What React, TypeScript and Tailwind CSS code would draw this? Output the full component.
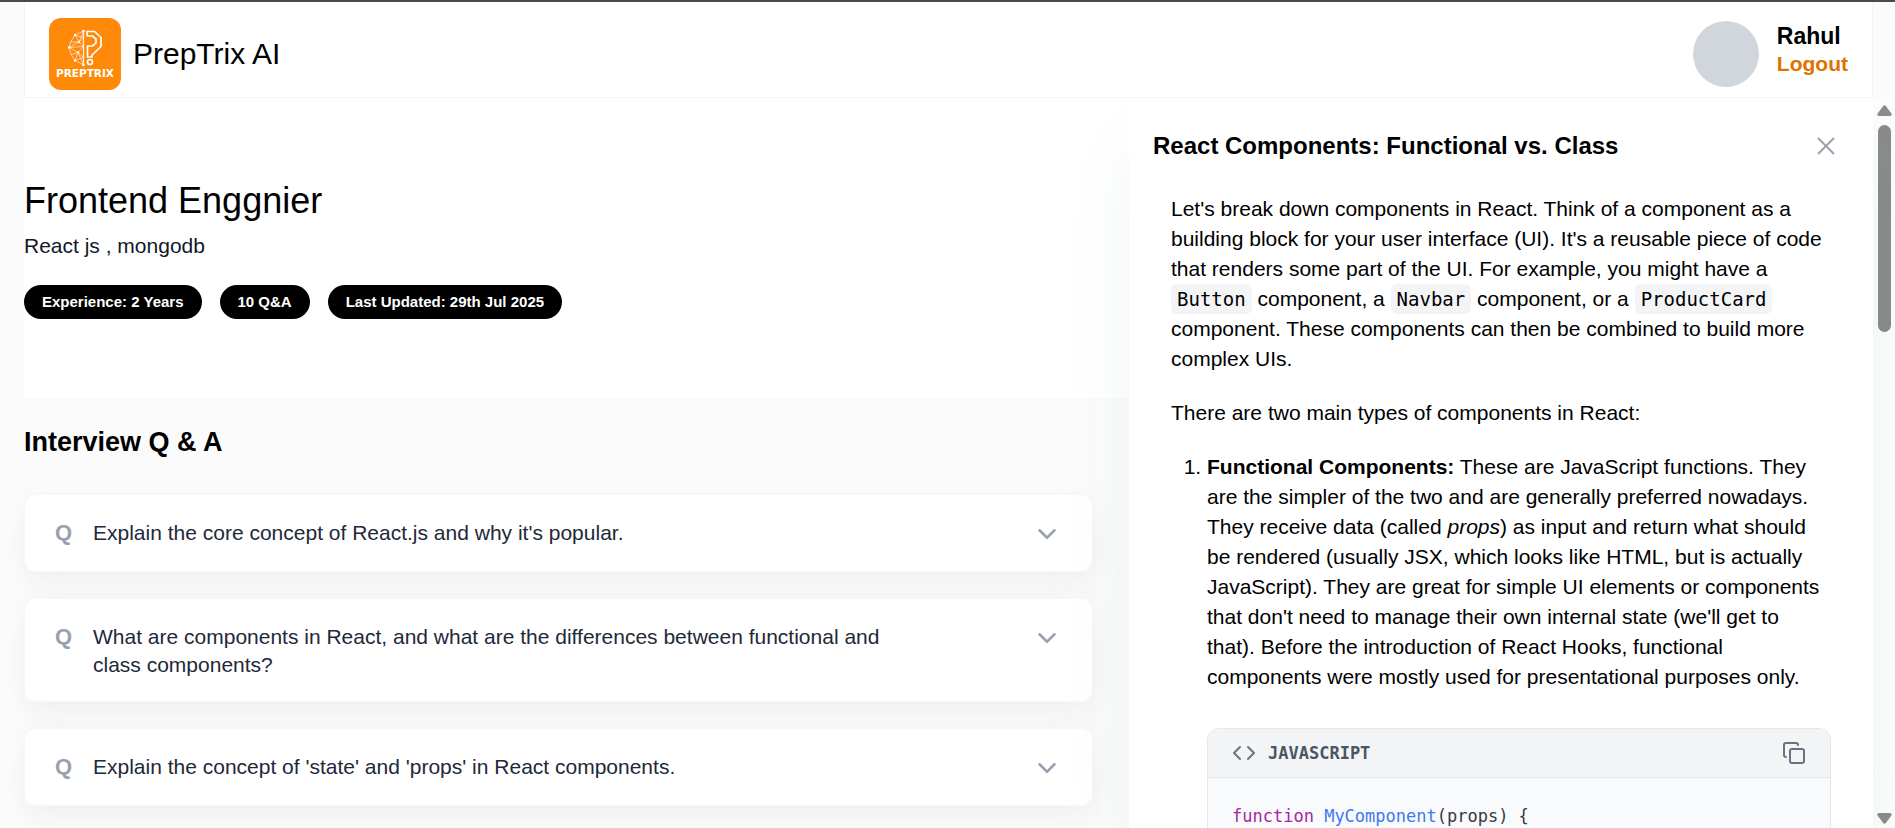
import { useState } from "react";
import { ChevronDown, Code, Copy, X } from "lucide-react";

const tags = ["Experience: 2 Years", "10 Q&A", "Last Updated: 29th Jul 2025"];

const questions = [
  "Explain the core concept of React.js and why it's popular.",
  "What are components in React, and what are the differences between functional and class components?",
  "Explain the concept of 'state' and 'props' in React components.",
];

function Logo() {
  return (
    <svg viewBox="0 0 72 72" className="size-18 shrink-0" role="img" aria-label="Preptrix logo">
      <rect width="72" height="72" rx="12" fill="#ff8a0a" />
      <g stroke="#e87b08" strokeWidth="0.8" strokeDasharray="2 1">
        <path d="M8 12l11-6M56 6l7 4M6 38l8-5M56 36l8-6M42 70l12-7" />
      </g>
      <g fill="none" stroke="#fff" strokeOpacity="0.85" strokeWidth="0.7" strokeLinejoin="round">
        <path d="M34.5 13L26 17l-4.5 7L20 29.500l2 7 4 6 8.500 4.500" />
        <path d="M34.500 13L30 24l4.500-4M26 17l4 7-8.500 0M30 24l-10 5.500 14.500-1M30 24l4.500 4.500-5.500 6-9-5M29 34.500l-7 2M29 34.500l-3 8M29 34.500l5.500 5-8.500 3M29 34.500l5.500 12.500M26 17l8.500 3" />
        <path d="M34.500 13v34" strokeWidth="1.300" />
      </g>
      <g fill="#fff">
        <circle cx="34.500" cy="13" r="1.300" />
        <circle cx="26" cy="17" r="1.200" />
        <circle cx="30" cy="24" r="1.200" />
        <circle cx="20.300" cy="29.500" r="1.300" />
        <circle cx="29" cy="34.500" r="1.200" />
        <circle cx="26" cy="42.500" r="1.200" />
        <circle cx="34.500" cy="47" r="1.300" />
      </g>
      <g fill="none" stroke="#fff" strokeWidth="1.700">
        <path d="M38 18v-4.500h7.500l6.500 6v9L43 37v2h-4.500V28H43.500l3.500-3v-4l-3.500-3H38" />
        <circle cx="41" cy="44" r="2.500" />
      </g>
      <text x="36" y="59" textAnchor="middle" fill="#fff" fontFamily="DejaVu Sans, sans-serif" fontWeight="700" fontSize="10.500">
        PREPTRIX
      </text>
    </svg>
  );
}

function Header() {
  return (
    <header className="mr-[22px] ml-6 flex h-24 shrink-0 items-center justify-between border-x border-b border-gray-100 bg-white px-6 pt-2">
      <a href="#" className="flex items-center gap-3">
        <Logo />
        <span className="text-[30px] leading-10">PrepTrix AI</span>
      </a>
      <div className="flex items-center gap-[18px]">
        <div className="size-[66px] rounded-full bg-[#d1d5dc]" />
        <div className="flex flex-col items-start pb-2 font-bold">
          <span className="text-[23px] leading-7">Rahul</span>
          <button type="button" className="text-[21px] leading-7 text-[#e17100]">
            Logout
          </button>
        </div>
      </div>
    </header>
  );
}

function QuestionCard({ text }: { text: string }) {
  const [open, setOpen] = useState(false);
  return (
    <li className="rounded-xl border border-gray-100/60 bg-white shadow-[0_20px_30px_-5px_rgba(229,231,235,0.35),0_4px_20px_rgba(229,231,235,0.3)]">
      <button
        type="button"
        aria-expanded={open}
        onClick={() => setOpen(!open)}
        className="flex w-full items-start px-[30px] pt-6 pb-[22px] text-left"
      >
        <span className="w-[38px] shrink-0 text-[22px] leading-7 font-bold text-[#99a1af]">Q</span>
        <span className="flex-1 pr-[150px] text-[21px] leading-7 text-[#1e2939]">{text}</span>
        <ChevronDown className="size-[30px] text-[#99a1af]" strokeWidth={2} />
      </button>
    </li>
  );
}

function InlineCode({ children }: { children: string }) {
  return (
    <code className="rounded-md bg-gray-100 px-[6px] py-1 font-['DejaVu_Sans_Mono',monospace] text-[19px]">
      {children}
    </code>
  );
}

function CodeBlock() {
  return (
    <figure className="mt-9 overflow-hidden rounded-xl border border-gray-200 bg-gray-50 font-['DejaVu_Sans_Mono',monospace]">
      <figcaption className="flex h-[49px] items-center justify-between border-b border-gray-200 bg-gray-100 px-6">
        <span className="flex items-center gap-3 text-[17px] font-bold text-[#4a5565]">
          <Code className="size-6 text-[#6a7282]" strokeWidth={2} />
          JAVASCRIPT
        </span>
        <button type="button" aria-label="Copy code" className="text-[#6a7282]">
          <Copy className="size-6" strokeWidth={2} />
        </button>
      </figcaption>
      <pre className="px-6 py-6 font-['DejaVu_Sans_Mono',monospace] text-[17px] leading-7 text-[#383a42]">
        <span className="text-[#a626a4]">function</span> <span className="text-[#4078f2]">MyComponent</span>
        {"(props) {"}
      </pre>
    </figure>
  );
}

function ExplanationPanel() {
  return (
    <aside className="relative z-10 w-[744px] shrink-0 bg-white pl-6 shadow-[0_36px_75px_-18px_rgba(0,95,120,0.1)]">
      <div className="flex items-center justify-between pt-8 pr-8">
        <h2 className="text-[24px] leading-8 font-bold">React Components: Functional vs. Class</h2>
        <button type="button" aria-label="Close" className="text-[#99a1af]">
          <X className="size-[30px]" strokeWidth={1.500} />
        </button>
      </div>
      <div className="mt-8 pr-[42px] pl-[18px] text-[21px] leading-[30px]">
        <p className="mb-6">
          Let's break down components in React. Think of a component as a building block for your user interface
          (UI). It's a reusable piece of code that renders some part of the UI. For example, you might have a{" "}
          <InlineCode>Button</InlineCode> component, a <InlineCode>Navbar</InlineCode> component, or a{" "}
          <InlineCode>ProductCard</InlineCode> component. These components can then be combined to build more
          complex UIs.
        </p>
        <p className="mb-6">There are two main types of components in React:</p>
        <ol className="list-decimal pl-9">
          <li>
            <p>
              <strong>Functional Components:</strong> These are JavaScript functions. They are the simpler of the two
              and are generally preferred nowadays. They receive data (called <em>props</em>) as input and return
              what should be rendered (usually JSX, which looks like HTML, but is actually JavaScript). They are
              great for simple UI elements or components that don't need to manage their own internal state (we'll
              get to that). Before the introduction of React Hooks, functional components were mostly used for
              presentational purposes only.
            </p>
            <CodeBlock />
          </li>
        </ol>
      </div>
    </aside>
  );
}

function ScrollRail() {
  return (
    <div aria-hidden="true" className="flex w-[22px] shrink-0 flex-col items-center bg-[#fcfcfc] pt-[7px] pb-1">
      <svg viewBox="0 0 15 11" className="h-[11px] w-[15px] shrink-0" fill="#8b8b8b">
        <path d="M6.200.9q1.300-1.400 2.600 0L14.600 8.700Q15 10.800 13 11H2Q0 10.800.4 8.700Z" />
      </svg>
      <div className="mt-[9px] h-[207px] w-[13px] rounded-full bg-[#8b8b8b]" />
      <svg viewBox="0 0 15 11" className="mt-auto h-[11px] w-[15px] shrink-0" fill="#8b8b8b">
        <path d="M6.200 10.100q1.300 1.400 2.600 0L14.600 2.300Q15 .2 13 0H2Q0 .2.4 2.300Z" />
      </svg>
    </div>
  );
}

export default function App() {
  return (
    <div className="flex h-screen flex-col overflow-hidden border-t-2 border-[#4a484b] bg-[#fbfbfb] font-['Liberation_Sans',Arial,sans-serif] text-black">
      <Header />
      <div className="flex min-h-0 flex-1 overflow-hidden">
        <main className="min-w-0 flex-1 pl-6">
          <section className="flex h-[300px] flex-col justify-center bg-white">
            <h1 className="text-[36px] leading-[48px]">Frontend Enggnier</h1>
            <p className="mt-[6px] text-[21px] leading-[30px] text-[#101828]">React js , mongodb</p>
            <ul className="mt-6 flex gap-[18px]">
              {tags.map((tag) => (
                <li key={tag} className="rounded-full bg-black px-[18px] py-[6px] text-[15px] leading-[22px] font-bold text-white">
                  {tag}
                </li>
              ))}
            </ul>
          </section>
          <section className="pt-[26px] pr-9">
            <h2 className="text-[27px] leading-9 font-bold">Interview Q &amp; A</h2>
            <ul className="mt-[34px] flex flex-col gap-[26px]">
              {questions.map((q) => (
                <QuestionCard key={q} text={q} />
              ))}
            </ul>
          </section>
        </main>
        <ExplanationPanel />
        <ScrollRail />
      </div>
    </div>
  );
}
